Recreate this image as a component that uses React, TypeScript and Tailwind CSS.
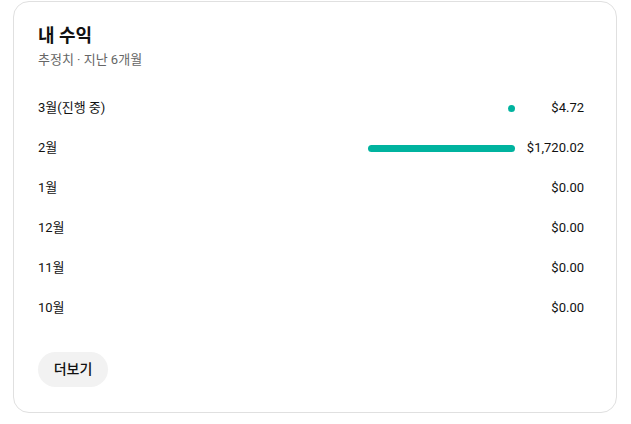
import React from "react";

const rows = [
  { label: "3월(진행 중)", amount: "$4.72", value: 4.72 },
  { label: "2월", amount: "$1,720.02", value: 1720.02 },
  { label: "1월", amount: "$0.00", value: 0 },
  { label: "12월", amount: "$0.00", value: 0 },
  { label: "11월", amount: "$0.00", value: 0 },
  { label: "10월", amount: "$0.00", value: 0 },
];

export default function App() {
  const max = 1720.02;
  const track = 147;
  return (
    <div
      className="w-[631px] h-[424px] bg-white pl-[13px] pt-[1px]"
      style={{ fontFamily: 'Roboto, "Noto Sans CJK KR", sans-serif' }}
    >
      <div className="w-[604px] h-[412px] border border-[#e0e0e0] rounded-[16px] pl-[24px] pr-[32px] pt-[20px]">
        <div className="text-[18px] leading-[28px] font-bold text-[#111]">내 수익</div>
        <div className="text-[13px] leading-[18px] text-[#666] mt-[1px]">추정치 · 지난 6개월</div>
        <div className="mt-[19px] flex flex-col">
          {rows.map((r) => {
            const w = r.value > 0 ? Math.max(7, (r.value / max) * track) : 0;
            return (
              <div key={r.label} className="h-[40px] flex items-center text-[13px] text-[#111]">
                <div className="flex-1">{r.label}</div>
                <div className="w-[147px] flex justify-end">
                  {w > 0 && (
                    <div className="h-[7px] rounded-full bg-[#00b39f]" style={{ width: `${w}px` }} />
                  )}
                </div>
                <div className="w-[69px] text-right">{r.amount}</div>
              </div>
            );
          })}
        </div>
        <button className="mt-[24px] h-[35px] w-[70px] rounded-full bg-[#f2f2f2] text-[14px] font-medium text-[#111]">
          더보기
        </button>
      </div>
    </div>
  );
}
